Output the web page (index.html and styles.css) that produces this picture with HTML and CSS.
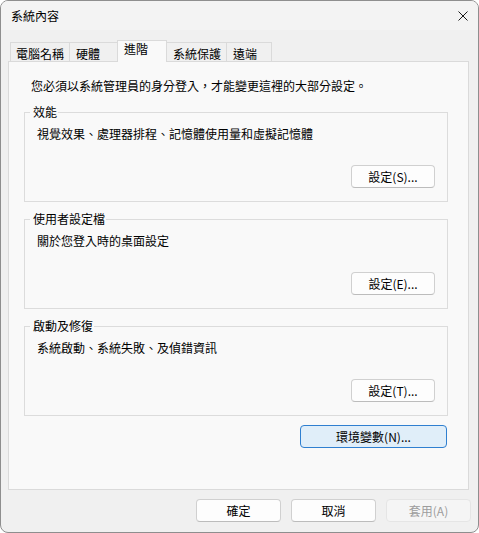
FILE: index.html
```html
<!DOCTYPE html>
<html lang="zh-Hant">
<head>
<meta charset="utf-8">
<title>系統內容</title>
<link rel="stylesheet" href="styles.css">
</head>
<body>
<div class="window">
  <div class="titlebar">
    <span class="title">系統內容</span>
    <svg class="close" width="10" height="10" viewBox="0 0 10 10"><path d="M0.5 0.5L9.5 9.5M9.5 0.5L0.5 9.5" stroke="#1a1a1a" stroke-width="1" fill="none"/></svg>
  </div>
  <div class="tabs">
    <div class="tab tab-1">電腦名稱</div>
    <div class="tab tab-2">硬體</div>
    <div class="tab tab-active">進階</div>
    <div class="tab tab-4">系統保護</div>
    <div class="tab tab-5">遠端</div>
  </div>
  <div class="panel">
    <p class="notice">您必須以系統管理員的身分登入，才能變更這裡的大部分設定。</p>
    <fieldset class="group">
      <legend>效能</legend>
      <div class="group-body">
        <p class="desc">視覺效果、處理器排程、記憶體使用量和虛擬記憶體</p>
        <div class="btn-row"><button class="btn">設定(S)...</button></div>
      </div>
    </fieldset>
    <fieldset class="group">
      <legend>使用者設定檔</legend>
      <div class="group-body">
        <p class="desc">關於您登入時的桌面設定</p>
        <div class="btn-row"><button class="btn">設定(E)...</button></div>
      </div>
    </fieldset>
    <fieldset class="group">
      <legend>啟動及修復</legend>
      <div class="group-body">
        <p class="desc">系統啟動、系統失敗、及偵錯資訊</p>
        <div class="btn-row"><button class="btn">設定(T)...</button></div>
      </div>
    </fieldset>
    <div class="env-row"><button class="btn btn-default">環境變數(N)...</button></div>
  </div>
  <div class="footer">
    <button class="btn btn-foot">確定</button>
    <button class="btn btn-foot">取消</button>
    <button class="btn btn-foot btn-disabled" disabled>套用(A)</button>
  </div>
</div>
</body>
</html>
```
FILE: styles.css
```css
* { box-sizing: border-box; }
html, body { margin: 0; padding: 0; background: #ffffff; }
body {
  font-family: "Noto Sans CJK TC", "Noto Sans", sans-serif;
  font-size: 12px;
  line-height: 16px;
  color: #1a1a1a;
}
.window {
  width: 479px;
  height: 533px;
  border: 1px solid #8e8e8e;
  border-radius: 8px;
  background: #f0f0f0;
  overflow: hidden;
  display: flex;
  flex-direction: column;
}
.titlebar {
  height: 29px;
  flex: none;
  background: #f3f3f3;
  display: flex;
  align-items: center;
  justify-content: space-between;
  padding: 0 10px 0 10px;
}
.title { font-size: 12px; line-height: 16px; color: #000; }
.close { display: block; }
.tabs {
  height: 31px;
  flex: none;
  display: flex;
  align-items: flex-end;
  padding-left: 9px;
}
.tab {
  height: 19px;
  border-top: 1px solid #dadada;
  border-left: 1px solid #dadada;
  background: #f0f0f0;
  padding: 3px 0 0 6px;
  color: #000;
  white-space: nowrap;
}
.tab-1 { width: 59px; padding-left: 5px; }
.tab-2 { width: 48px; }
.tab-4 { width: 59px; border-left: none; padding-left: 6px; }
.tab-5 { width: 46px; border-right: 1px solid #dadada; }
.tab-active {
  width: 50px;
  height: 22px;
  margin-bottom: -1px;
  background: #f9f9f9;
  border: 1px solid #dadada;
  border-bottom: none;
  padding-top: 0;
  position: relative;
  z-index: 1;
}
.panel {
  height: 429px;
  flex: none;
  margin: 0 9px 0 7px;
  background: #f9f9f9;
  border: 1px solid #dadada;
  padding-top: 16px;
}
.notice {
  margin: 0 0 10px 22px;
  color: #000;
}
.group {
  margin: 0 20px 9px 15px;
  padding: 0 0 13px 0;
  border: 1px solid #dcdcdc;
  min-width: 0;
}
.group legend {
  margin-left: 5px;
  padding: 0 1px 0 3px;
  line-height: 16px;
  color: #000;
}
.group-body { padding: 0 12px; }
.desc { margin: 6px 0 0 0; color: #000; }
.btn-row {
  margin-top: 23px;
  display: flex;
  justify-content: flex-end;
}
.btn {
  font-family: "Noto Sans CJK TC", "Noto Sans", sans-serif;
  font-size: 12px;
  line-height: 16px;
  color: #000;
  height: 23px;
  width: 84px;
  padding: 0;
  background: #fdfdfd;
  border: 1px solid #d0d0d0;
  border-bottom-color: #bcbcbc;
  border-radius: 4px;
}
.env-row {
  margin-top: 7px;
  display: flex;
  justify-content: flex-end;
  padding-right: 21px;
}
.btn-default {
  width: 147px;
  background: #e0eef9;
  border: 1px solid #2f7fd0;
}
.footer {
  flex: none;
  display: flex;
  justify-content: flex-end;
  gap: 10px;
  padding: 9px 7px 0 0;
}
.btn-foot { width: 85px; }
.btn-disabled {
  background: #f5f5f5;
  border: 1px solid #e5e5e5;
  color: #9d9d9d;
}
```
